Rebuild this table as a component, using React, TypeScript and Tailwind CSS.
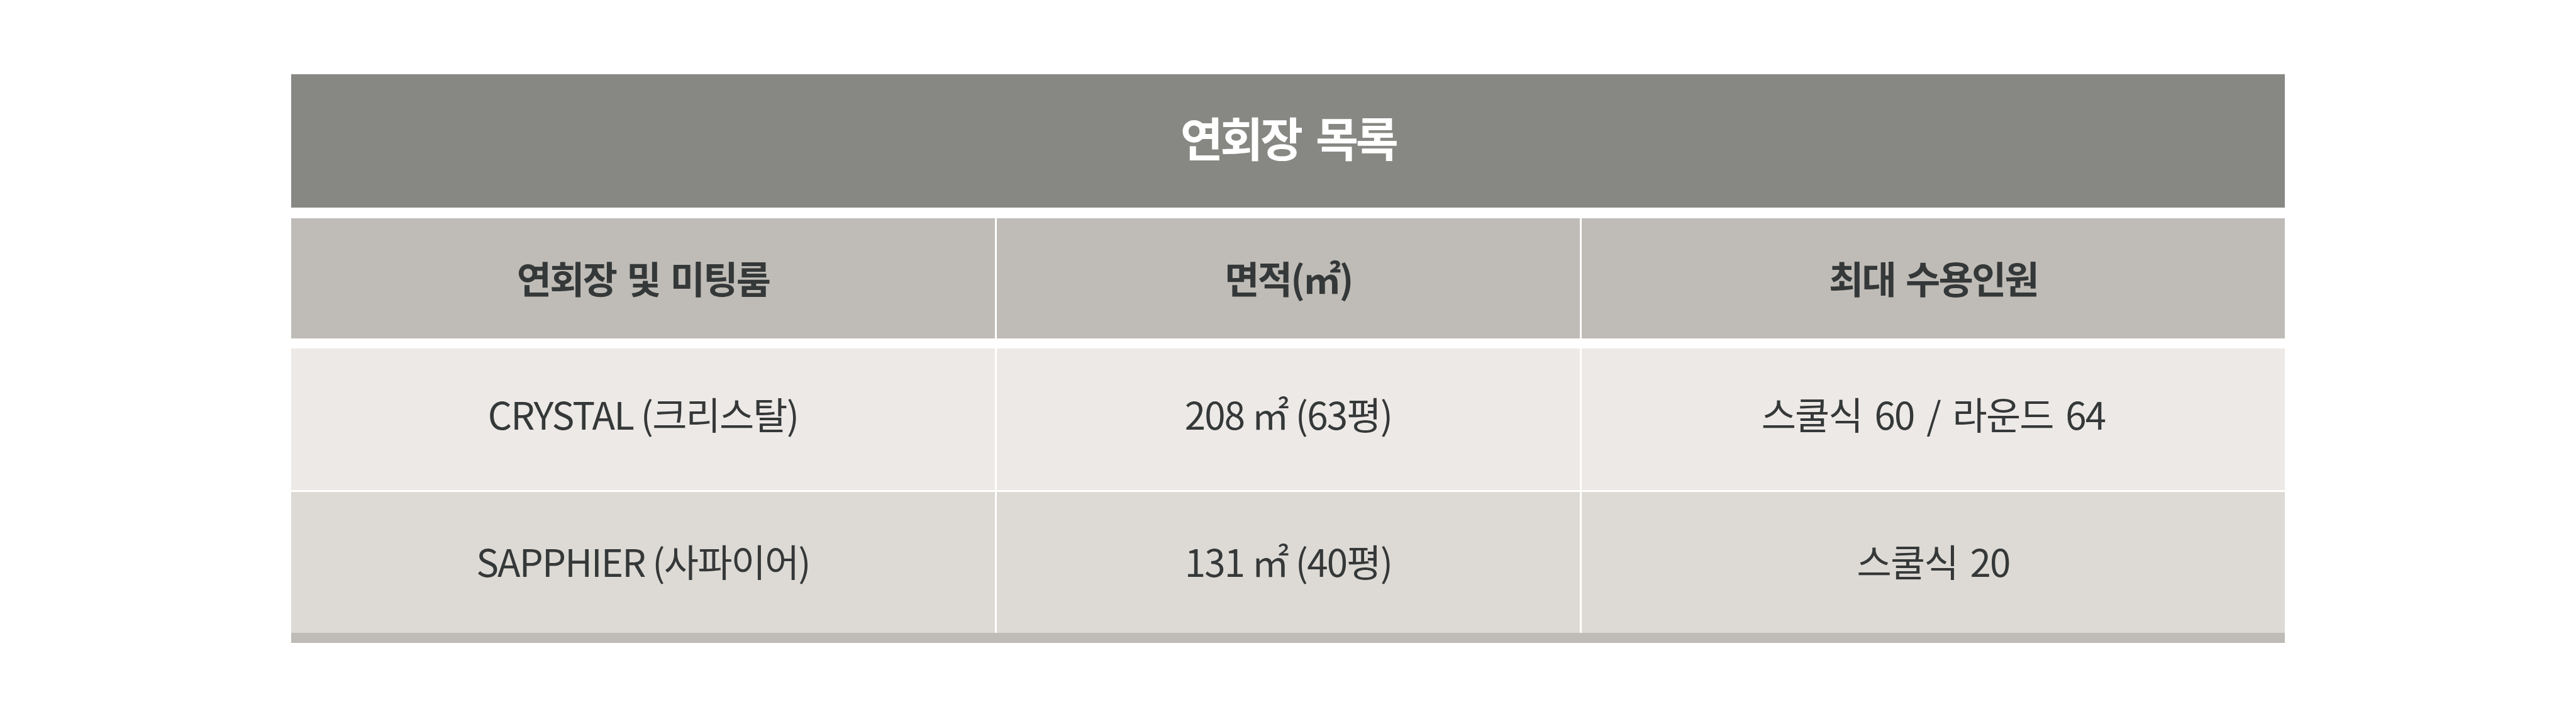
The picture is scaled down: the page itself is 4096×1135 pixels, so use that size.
const columns = ["연회장 및 미팅룸", "면적(㎡)", "최대 수용인원"]

const rows = [
  {
    name: "CRYSTAL (크리스탈)",
    area: "208 ㎡ (63평)",
    capacity: "스쿨식 60 / 라운드 64",
    bg: "bg-[#ece9e6]",
    box: "h-[225px] pb-[20px]",
  },
  {
    name: "SAPPHIER (사파이어)",
    area: "131 ㎡ (40평)",
    capacity: "스쿨식 20",
    bg: "bg-[#dddad5]",
    box: "h-[224px] pb-[7px]",
  },
]

export default function App() {
  return (
    <div className="min-h-[1135px] bg-white pt-[118px] font-['Noto_Sans_CJK_KR',sans-serif] text-[#353838]">
      <div className="mx-auto flex w-[3170px] flex-col">
        {/* Title bar */}
        <div className="flex h-[212px] items-center justify-center bg-[#878883] pb-[15px]">
          <h2 className="text-[74px] font-bold leading-none tracking-[-0.06em] text-white [word-spacing:12px]">
            연회장 목록
          </h2>
        </div>

        {/* Header row */}
        <div className="mt-[17px] grid h-[191px] grid-cols-[1119px_927px_1118px] gap-x-[3px]">
          {columns.map((col) => (
            <div
              key={col}
              className="flex items-center justify-center bg-[#bfbcb7] pb-[4px] text-[60px] font-bold leading-none tracking-[-0.045em] [word-spacing:6px]"
            >
              {col}
            </div>
          ))}
        </div>

        {/* Data rows */}
        <div className="mt-[16px] flex flex-col gap-y-[3px]">
          {rows.map((row) => (
            <div
              key={row.name}
              className="grid grid-cols-[1119px_927px_1118px] gap-x-[3px]"
            >
              {[row.name, row.area, row.capacity].map((cell, j) => (
                <div
                  key={j}
                  className={`flex items-center justify-center ${row.bg} ${row.box} text-[60px] font-normal leading-none tracking-[-0.03em] ${j === 2 ? "[word-spacing:8px]" : ""}`}
                >
                  {cell}
                </div>
              ))}
            </div>
          ))}
        </div>

        {/* Bottom bar */}
        <div className="h-[16px] bg-[#bfbcb7]" />
      </div>
    </div>
  )
}
